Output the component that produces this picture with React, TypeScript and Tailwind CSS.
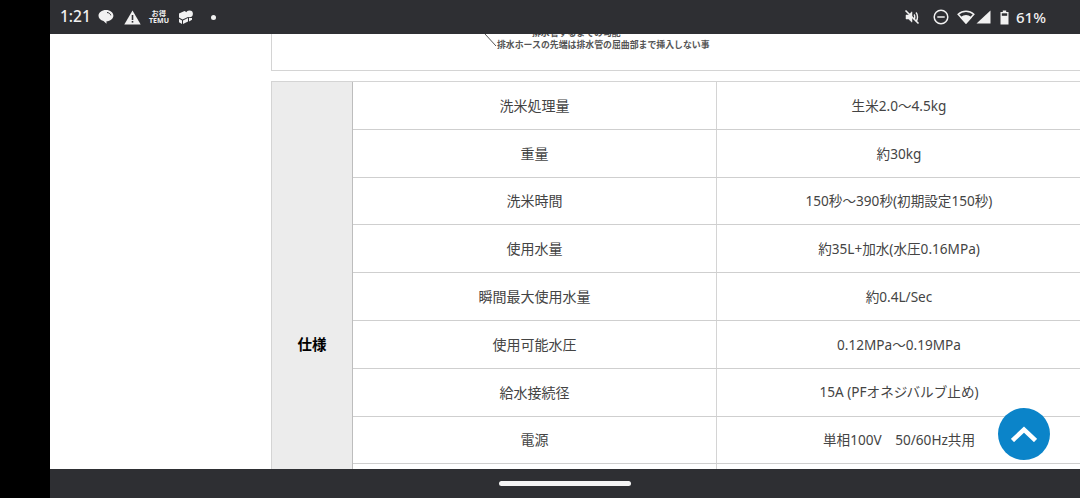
const rows = [
  ["洗米処理量", "生米2.0〜4.5kg"],
  ["重量", "約30kg"],
  ["洗米時間", "150秒〜390秒(初期設定150秒)"],
  ["使用水量", "約35L+加水(水圧0.16MPa)"],
  ["瞬間最大使用水量", "約0.4L/Sec"],
  ["使用可能水圧", "0.12MPa〜0.19MPa"],
  ["給水接続径", "15A (PFオネジバルブ止め)"],
  ["電源", "単相100V　50/60Hz共用"],
  ["", ""],
  ["", ""],
  ["", ""],
];

function StatusLeft() {
  return (
    <div className="flex items-center text-[#f1f1f1]">
      <span className="ml-[10px] w-[30px] text-[15.500px] font-medium leading-none">1:21</span>
      <svg width="16" height="16" viewBox="0 0 16 16" className="ml-[8px]" fill="#f1f1f1">
        <path d="M8 1c-4.200 0-7.500 2.500-7.500 5.700 0 2.500 2.100 4.600 5 5.300l3 2.800v-2.500c3.800-.2 6.900-2.700 6.900-5.600C15.400 3.500 12.200 1 8 1z" />
        <path d="M9 3.500c2 .2 3.500 1.300 3.700 2.800" stroke="#2e2f33" strokeWidth="1" fill="none" />
      </svg>
      <svg width="17" height="15" viewBox="0 0 17 15" className="ml-[10px]">
        <path d="M8.500 0.500 16.700 14.500H0.300z" fill="#f1f1f1" />
        <rect x="7.700" y="5" width="1.600" height="5" fill="#2e2f33" />
        <rect x="7.700" y="11" width="1.600" height="1.600" fill="#2e2f33" />
      </svg>
      <div className="ml-[9px] flex w-[18px] flex-col items-center text-[7px] font-bold leading-[7px]">
        <span className="whitespace-nowrap tracking-[0.500px]">お得</span>
        <span>TEMU</span>
      </div>
      <svg width="16" height="16" viewBox="0 0 16 16" className="ml-[10px]" fill="#f1f1f1">
        <path d="M1 4.500 6.500 2 10 4v4L4.500 10.500 1 8.500z" />
        <path d="M1 9.800 4 11.600V15L1 13.200z" />
        <path d="M5 11.600 10 9v3.500L5 15z" />
        <circle cx="11.500" cy="4.800" r="3.400" />
        <path d="M11 9h3v1.800l-3 1.700z" />
      </svg>
      <span className="ml-[17px] h-[5px] w-[5px] rounded-full bg-[#f1f1f1]" />
    </div>
  );
}

function StatusRight() {
  return (
    <div className="flex items-center text-[#f1f1f1]">
      <svg width="16" height="16" viewBox="0 0 16 16" fill="#f1f1f1" stroke="#f1f1f1">
        <path d="M2 6h2.500L8 2.800v10.400L4.500 10H2z" strokeWidth="0.500" />
        <path d="M10 5.500c1 1.200 1 3.800 0 5M12 3.500c2 2.200 2 6.800 0 9" fill="none" strokeWidth="1.400" />
        <path d="M1.500 1.500 14.500 14.500" strokeWidth="1.600" />
      </svg>
      <svg width="16" height="16" viewBox="0 0 16 16" fill="none" stroke="#f1f1f1" strokeWidth="1.500" className="ml-[13px]">
        <circle cx="8" cy="8" r="6.800" />
        <path d="M4.300 8h7.400" />
      </svg>
      <svg width="18" height="14" viewBox="0 0 18 14" className="ml-[8px]" fill="none" stroke="#f1f1f1" strokeWidth="1.500">
        <path d="M1.200 4.300C5.800.2 12.200.2 16.800 4.300L9 12.800z" />
        <path d="M4.200 7.600C7 5.600 11 5.600 13.800 7.600L9 12.800z" fill="#f1f1f1" />
      </svg>
      <svg width="15" height="14" viewBox="0 0 15 14" className="ml-[1px]">
        <path d="M14.500 0.500V13.500H0.500z" fill="#f1f1f1" />
      </svg>
      <svg width="9" height="15" viewBox="0 0 9 15" className="ml-[9px]">
        <path d="M2.800 0.500h3.400v1.500H8.500v12.500H0.500V2H2.800z" fill="#f1f1f1" />
        <rect x="1.800" y="3.300" width="5.400" height="2.500" fill="#2e2f33" />
      </svg>
      <span className="ml-[7px] mr-[35px] w-[29px] whitespace-nowrap text-[15px] font-medium leading-none">61%</span>
    </div>
  );
}

export default function App() {
  return (
    <div className="flex h-[498px] w-[1080px] overflow-hidden bg-black font-['Noto_Sans','Noto_Sans_CJK_JP',sans-serif]">
      <div className="w-[50px] shrink-0" />
      <div className="flex min-w-0 flex-1 flex-col">
        <div className="flex h-[34px] shrink-0 items-center justify-between bg-[#2e2f33]">
          <StatusLeft />
          <StatusRight />
        </div>

        <div className="relative min-h-0 flex-1 overflow-hidden bg-white pl-[221px]">
          <div className="relative h-[37px] w-[820px] border-b border-l border-[#d4d4d4]">
            <svg width="14" height="14" viewBox="0 0 14 14" className="absolute left-[212px] top-0" fill="none" stroke="#555" strokeWidth="1">
              <path d="M1 0 12 12" />
            </svg>
            <p className="absolute left-[225px] top-[6px] whitespace-nowrap text-[8.900px] font-bold leading-[10px] text-[#555]">
              排水ホースの先端は排水管の屈曲部まで挿入しない事
            </p>
            <p className="absolute left-[260px] top-[-6px] whitespace-nowrap text-[8.900px] font-bold leading-[10px] text-[#555]">
              排水管するまでの勾配
            </p>
          </div>

          <div className="mt-[10px] flex w-[820px] border-l border-t border-[#d4d4d4] text-[14px] text-[#444]">
            <div className="flex w-[81px] shrink-0 items-center justify-center border-r border-[#bdbdbd] bg-[#ececec] text-[14.500px] font-bold text-black">
              仕様
            </div>
            <div className="flex-1">
              {rows.map(([label, value], i) => (
                <div key={i} className="flex h-[47.800px] items-center border-b border-[#cfcfcf] text-center">
                  <div className="flex h-full w-[364px] shrink-0 items-center justify-center border-r border-[#d4d4d4]">
                    {label}
                  </div>
                  <div className="w-[364px] whitespace-pre pt-[1px] text-[13.600px]">{value}</div>
                </div>
              ))}
            </div>
          </div>

          <button className="absolute bottom-[9px] right-[30px] flex h-[52px] w-[52px] items-center justify-center rounded-full bg-[#0b84c9]">
            <svg width="26" height="16" viewBox="0 0 26 16" fill="none" stroke="white" strokeWidth="4.500">
              <path d="M1.500 14.500 13 3.500 24.500 14.500" />
            </svg>
          </button>
        </div>

        <div className="flex h-[29px] shrink-0 items-center justify-center bg-[#2e2f33]">
          <div className="h-[5px] w-[132px] rounded-full bg-[#f4f4f4]" />
        </div>
      </div>
    </div>
  );
}
